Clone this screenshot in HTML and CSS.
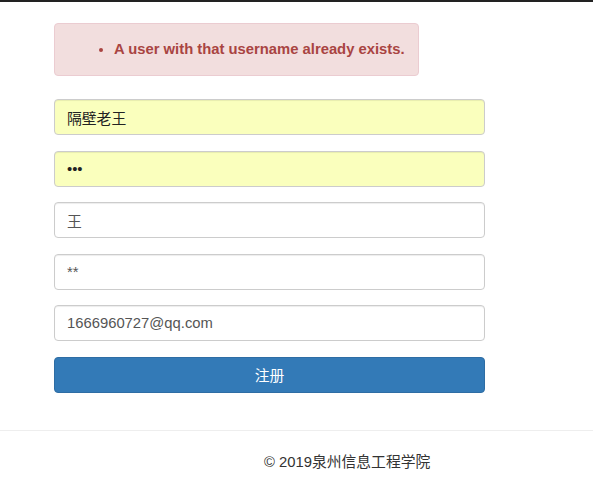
FILE: index.html
```html
<!DOCTYPE html>
<html lang="zh">
<head>
<meta charset="utf-8">
<title>注册</title>
<link rel="stylesheet" href="styles.css">
</head>
<body>
<div class="topbar"></div>
<main class="container">
  <div class="alert">
    <ul class="errors">
      <li>A user with that username already exists.</li>
    </ul>
  </div>
  <form class="form">
    <input class="field autofill" type="text" value="隔壁老王">
    <input class="field autofill" type="password" value="abc">
    <input class="field" type="text" value="王">
    <input class="field" type="text" value="**">
    <input class="field" type="text" value="1666960727@qq.com">
    <button class="btn" type="button">注册</button>
  </form>
</main>
<footer class="footer">
  <p class="copy">© 2019泉州信息工程学院</p>
</footer>
</body>
</html>
```
FILE: styles.css
```css
* { box-sizing: border-box; }
html, body { margin: 0; padding: 0; background: #fff; }
body {
  font-family: "Liberation Sans", Arial, "Noto Sans CJK SC", sans-serif;
  font-size: 14.8px;
  line-height: 20px;
  color: #333;
}
.topbar { height: 2px; background: #222; }
.container { padding: 21px 0 0 54px; }
.alert {
  width: 365px;
  height: 53px;
  background: #f2dede;
  border: 1px solid #ebccd1;
  border-radius: 4px;
  color: #a94442;
  font-weight: bold;
  padding: 15px 0 16px 15px;
  white-space: nowrap;
}
.errors { margin: 0; padding-left: 44px; }
.form {
  margin-top: 23px;
  width: 431px;
  display: flex;
  flex-direction: column;
  gap: 15.6px;
}
.field {
  display: block;
  width: 100%;
  height: 36px;
  padding: 6px 12px;
  border: 1px solid #ccc;
  border-radius: 4px;
  box-shadow: inset 0 1px 1px rgba(0,0,0,0.075);
  font-family: "Liberation Sans", Arial, "Noto Sans CJK SC", sans-serif;
  font-size: 14.8px;
  color: #555;
  background: #fff;
  outline: none;
}
.field.autofill { background: #faffbd; color: #222; }
.btn {
  height: 36px;
  width: 100%;
  background: #337ab7;
  border: 1px solid #2e6da4;
  border-radius: 4px;
  color: #fff;
  font-family: "Liberation Sans", Arial, "Noto Sans CJK SC", sans-serif;
  font-size: 14.8px;
}
.footer {
  margin-top: 37px;
  border-top: 1px solid #eee;
  padding-top: 21px;
  padding-left: 264px;
}
.copy { margin: 0; color: #333; }
```
